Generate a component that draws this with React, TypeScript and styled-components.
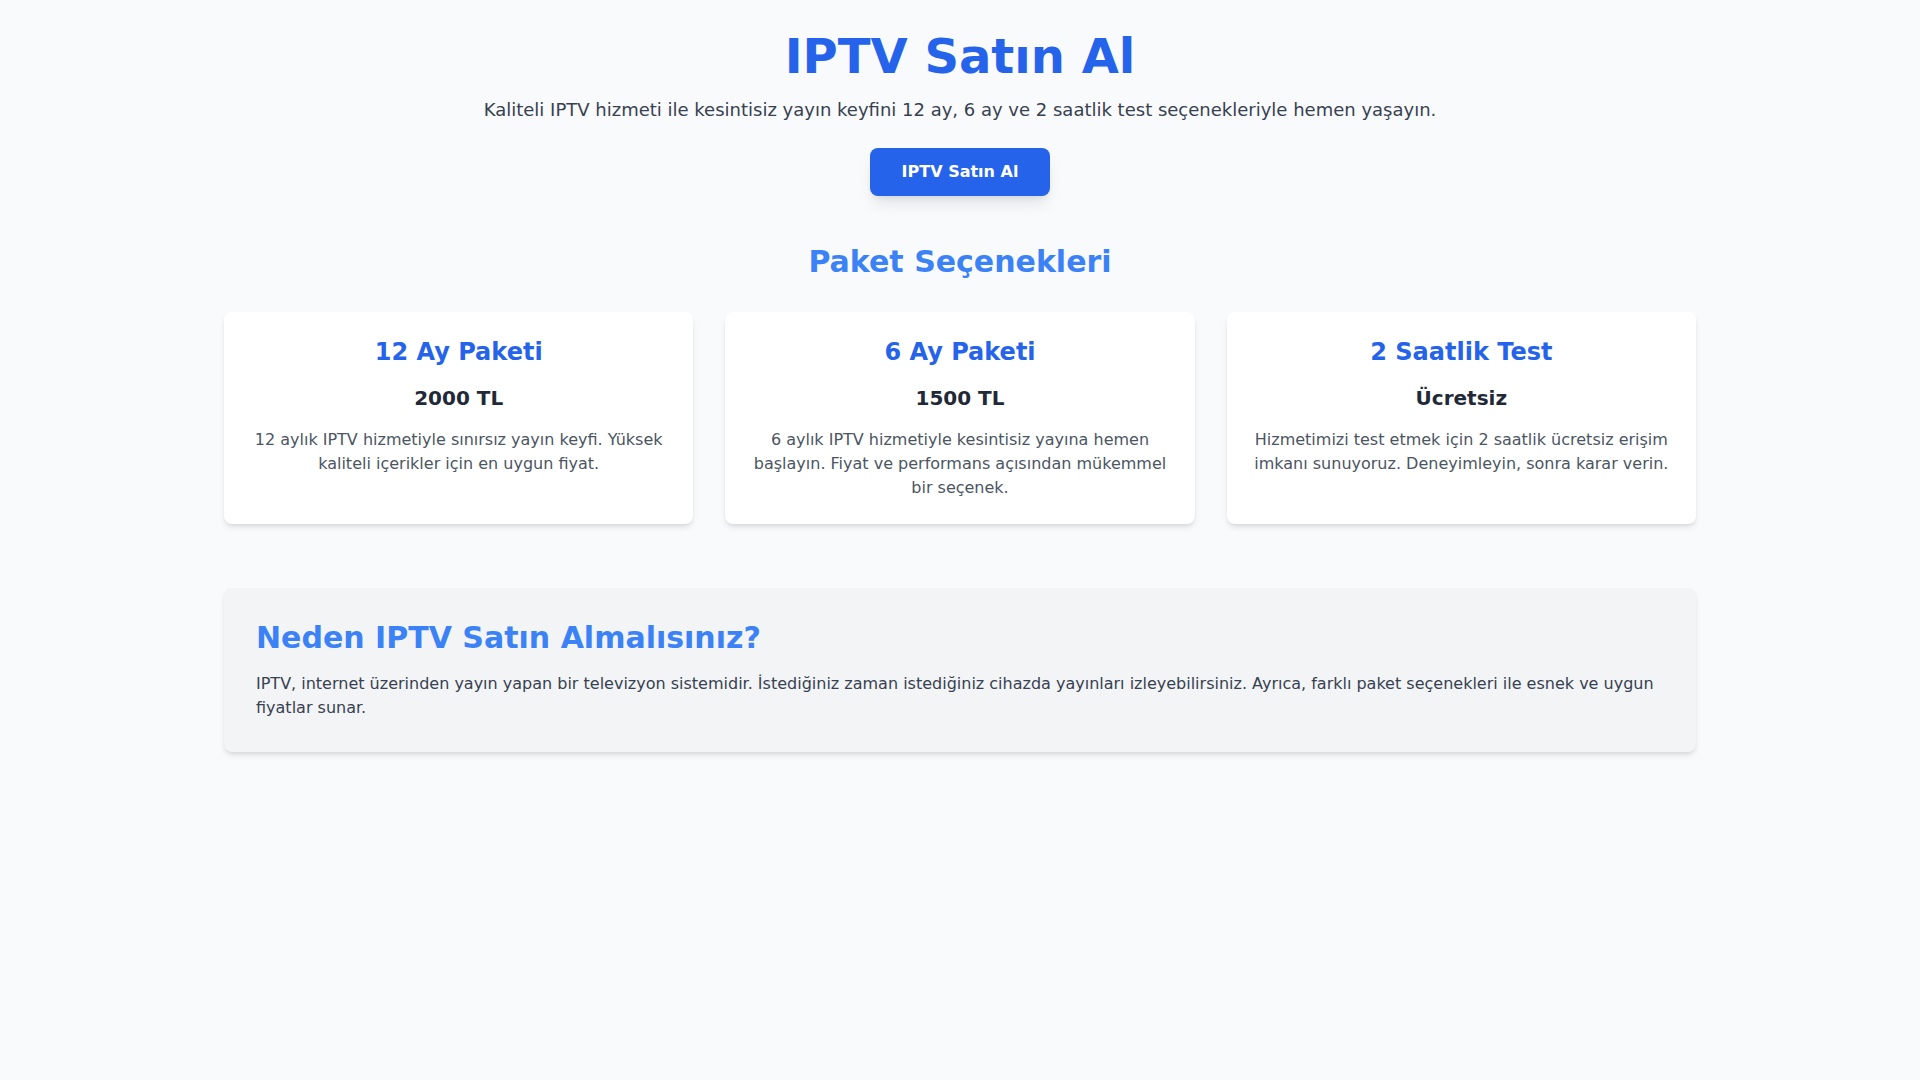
import React from "react";
import styled, { createGlobalStyle } from "styled-components";

const GlobalStyle = createGlobalStyle`
  html, body {
    margin: 0;
    padding: 0;
    background: #f9fafb;
  }
  body {
    font-family: "DejaVu Sans", "Noto Sans", sans-serif;
    color: #1f2937;
    min-height: 100vh;
  }
  * { box-sizing: border-box; }
`;

const Page = styled.main`
  min-height: 100vh;
  background: #f9fafb;
`;

const Container = styled.div`
  max-width: 1536px;
  margin: 0 auto;
  padding: 32px 32px;
`;

const Hero = styled.header`
  display: flex;
  flex-direction: column;
  align-items: center;
  text-align: center;
`;

const Title = styled.h1`
  margin: 0 0 16px;
  font-size: 48px;
  line-height: 48px;
  font-weight: 700;
  color: #2563eb;
`;

const Lead = styled.p`
  margin: 0 0 24px;
  font-size: 18px;
  line-height: 28px;
  color: #374151;
`;

const CtaButton = styled.button`
  font-family: inherit;
  font-size: 16px;
  line-height: 24px;
  font-weight: 700;
  color: #ffffff;
  background: #2563eb;
  border: none;
  border-radius: 8px;
  padding: 12px 32px;
  cursor: pointer;
  box-shadow: 0 10px 15px -3px rgba(0, 0, 0, 0.1), 0 4px 6px -4px rgba(0, 0, 0, 0.1);
`;

const Packages = styled.section`
  margin-top: 48px;
`;

const SectionTitle = styled.h2<{ $align?: "left" | "center"; $gap?: number }>`
  margin: 0 0 ${(p) => p.$gap ?? 32}px;
  font-size: 30px;
  line-height: 36px;
  font-weight: 700;
  color: #3b82f6;
  text-align: ${(p) => p.$align ?? "center"};
`;

const CardGrid = styled.div`
  display: grid;
  grid-template-columns: repeat(3, 1fr);
  gap: 32px;
`;

const Card = styled.article`
  background: #ffffff;
  border-radius: 8px;
  padding: 24px;
  text-align: center;
  box-shadow: 0 4px 6px -1px rgba(0, 0, 0, 0.1), 0 2px 4px -2px rgba(0, 0, 0, 0.1);
`;

const CardTitle = styled.h3`
  margin: 0 0 16px;
  font-size: 24px;
  line-height: 32px;
  font-weight: 700;
  color: #2563eb;
`;

const Price = styled.p`
  margin: 0 0 16px;
  font-size: 20px;
  line-height: 28px;
  font-weight: 700;
  color: #1f2937;
`;

const CardText = styled.p`
  margin: 0;
  font-size: 16px;
  line-height: 24px;
  color: #4b5563;
`;

const Why = styled.section`
  margin-top: 64px;
  background: #f3f4f6;
  border-radius: 8px;
  padding: 32px;
  box-shadow: 0 4px 6px -1px rgba(0, 0, 0, 0.1), 0 2px 4px -2px rgba(0, 0, 0, 0.1);
`;

const WhyText = styled.p`
  margin: 0;
  font-size: 16px;
  line-height: 24px;
  color: #374151;
`;

const packages = [
  {
    name: "12 Ay Paketi",
    price: "2000 TL",
    text: "12 aylık IPTV hizmetiyle sınırsız yayın keyfi. Yüksek kaliteli içerikler için en uygun fiyat.",
  },
  {
    name: "6 Ay Paketi",
    price: "1500 TL",
    text: "6 aylık IPTV hizmetiyle kesintisiz yayına hemen başlayın. Fiyat ve performans açısından mükemmel bir seçenek.",
  },
  {
    name: "2 Saatlik Test",
    price: "Ücretsiz",
    text: "Hizmetimizi test etmek için 2 saatlik ücretsiz erişim imkanı sunuyoruz. Deneyimleyin, sonra karar verin.",
  },
];

export default function App() {
  return (
    <Page>
      <GlobalStyle />
      <Container>
        <Hero>
          <Title>IPTV Satın Al</Title>
          <Lead>
            Kaliteli IPTV hizmeti ile kesintisiz yayın keyfini 12 ay, 6 ay ve 2 saatlik test seçenekleriyle hemen yaşayın.
          </Lead>
          <CtaButton>IPTV Satın Al</CtaButton>
        </Hero>

        <Packages>
          <SectionTitle>Paket Seçenekleri</SectionTitle>
          <CardGrid>
            {packages.map((p) => (
              <Card key={p.name}>
                <CardTitle>{p.name}</CardTitle>
                <Price>{p.price}</Price>
                <CardText>{p.text}</CardText>
              </Card>
            ))}
          </CardGrid>
        </Packages>

        <Why>
          <SectionTitle $align="left" $gap={16}>
            Neden IPTV Satın Almalısınız?
          </SectionTitle>
          <WhyText>
            IPTV, internet üzerinden yayın yapan bir televizyon sistemidir. İstediğiniz zaman istediğiniz cihazda yayınları izleyebilirsiniz. Ayrıca, farklı paket seçenekleri ile esnek ve uygun fiyatlar sunar.
          </WhyText>
        </Why>
      </Container>
    </Page>
  );
}
